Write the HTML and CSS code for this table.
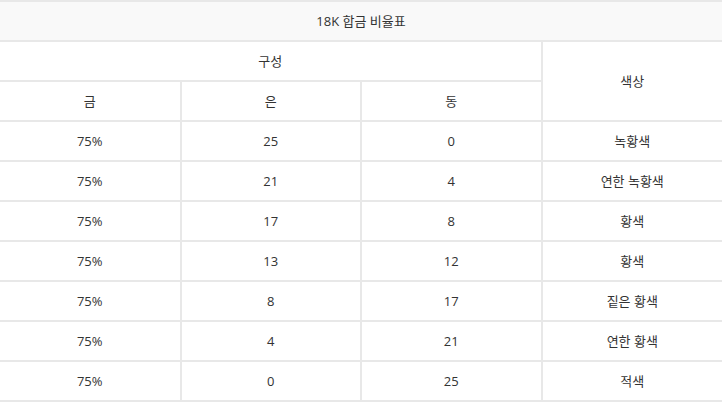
FILE: index.html
```html
<!DOCTYPE html>
<html lang="ko">
<head>
<meta charset="utf-8">
<link rel="stylesheet" href="styles.css">
</head>
<body>
<table class="alloy">
  <thead>
    <tr><th class="caption" colspan="4">18K 합금 비율표</th></tr>
    <tr><th colspan="3">구성</th><th rowspan="2">색상</th></tr>
    <tr><th>금</th><th>은</th><th>동</th></tr>
  </thead>
  <tbody>
    <tr><td>75%</td><td>25</td><td>0</td><td>녹황색</td></tr>
    <tr><td>75%</td><td>21</td><td>4</td><td>연한 녹황색</td></tr>
    <tr><td>75%</td><td>17</td><td>8</td><td>황색</td></tr>
    <tr><td>75%</td><td>13</td><td>12</td><td>황색</td></tr>
    <tr><td>75%</td><td>8</td><td>17</td><td>짙은 황색</td></tr>
    <tr><td>75%</td><td>4</td><td>21</td><td>연한 황색</td></tr>
    <tr><td>75%</td><td>0</td><td>25</td><td>적색</td></tr>
  </tbody>
</table>
</body>
</html>
```
FILE: styles.css
```css
html, body {
  margin: 0;
  padding: 0;
  background: #ffffff;
}
.alloy {
  width: 722px;
  border-collapse: collapse;
  table-layout: fixed;
  font-family: "Open Sans", "Noto Sans CJK KR", sans-serif;
  font-size: 13px;
  color: #333333;
}
.alloy th,
.alloy td {
  height: 38px;
  padding: 0;
  border: 2px solid #e8e8e8;
  text-align: center;
  vertical-align: middle;
  font-weight: normal;
  line-height: 16px;
}
.alloy tr > :first-child {
  border-left: none;
}
.alloy tr > :last-child {
  border-right: none;
}
.alloy .caption {
  background: #f9f9f9;
}
```
